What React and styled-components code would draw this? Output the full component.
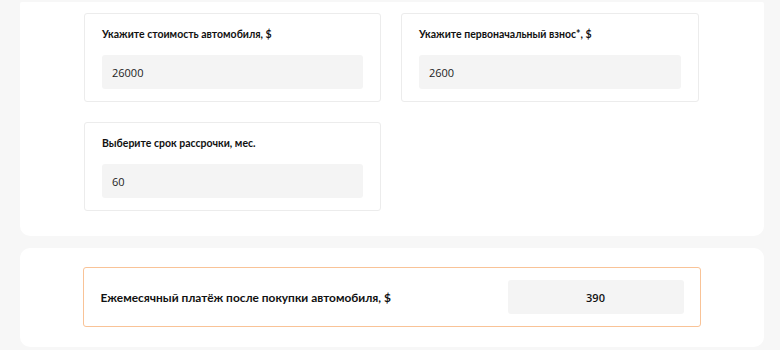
import React from "react";
import styled, { createGlobalStyle } from "styled-components";

const GlobalStyle = createGlobalStyle`
  body {
    margin: 0;
    background: #f7f7f7;
    font-family: "Lato", "Noto Sans", sans-serif;
    color: #111;
  }
`;

const fields = [
  { label: "Укажите стоимость автомобиля, $", value: "26000" },
  { label: "Укажите первоначальный взнос*, $", value: "2600" },
  { label: "Выберите срок рассрочки, мес.", value: "60" },
];

const App = () => {
  return (
    <>
      <GlobalStyle />
      <Page>
        <Panel $top>
          <Grid>
            {fields.map((f) => (
              <Card key={f.label}>
                <Label>{f.label}</Label>
                <Input value={f.value} readOnly />
              </Card>
            ))}
          </Grid>
        </Panel>
        <Panel>
          <Result>
            <ResultLabel>Ежемесячный платёж после покупки автомобиля, $</ResultLabel>
            <ResultValue>390</ResultValue>
          </Result>
        </Panel>
      </Page>
    </>
  );
};

const Page = styled.div`
  display: flex;
  flex-direction: column;
  gap: 12px;
  padding: 2px 16px 0 20px;
`;

const Panel = styled.div`
  background: #fff;
  border-radius: ${(p) => (p.$top ? "2px 2px 10px 10px" : "10px")};
  padding: ${(p) => (p.$top ? "11px 0 25px" : "19px 0 20px")};
  display: flex;
  justify-content: center;
`;

const Grid = styled.div`
  display: grid;
  grid-template-columns: 297px 298px;
  gap: 20px;
  margin-left: -1px;
`;

const Card = styled.div`
  border: 1px solid #ececec;
  border-radius: 3px;
  padding: 10px 17px 12px;
  display: flex;
  flex-direction: column;
  gap: 11px;
`;

const Label = styled.div`
  font-size: 10.5px;
  font-weight: 700;
  line-height: 20px;
  height: 20px;
`;

const Input = styled.input`
  border: none;
  outline: none;
  background: #f4f4f4;
  border-radius: 3px;
  height: 34px;
  padding: 0 10px;
  font-family: "Open Sans", sans-serif;
  font-size: 11px;
  font-weight: 500;
  color: #222;
  box-sizing: border-box;
  width: 100%;
`;

const Result = styled.div`
  width: 618px;
  box-sizing: border-box;
  border: 1px solid #f9c397;
  border-radius: 3px;
  padding: 12px 16px 12px 17px;
  display: flex;
  align-items: center;
  justify-content: space-between;
  margin-left: -1px;
`;

const ResultLabel = styled.div`
  font-size: 11.9px;
  font-weight: 700;
`;

const ResultValue = styled.div`
  width: 176px;
  height: 34px;
  background: #f4f4f4;
  border-radius: 3px;
  display: flex;
  align-items: center;
  justify-content: center;
  font-family: "Open Sans", sans-serif;
  font-size: 11px;
  font-weight: 600;
`;

export default App;
